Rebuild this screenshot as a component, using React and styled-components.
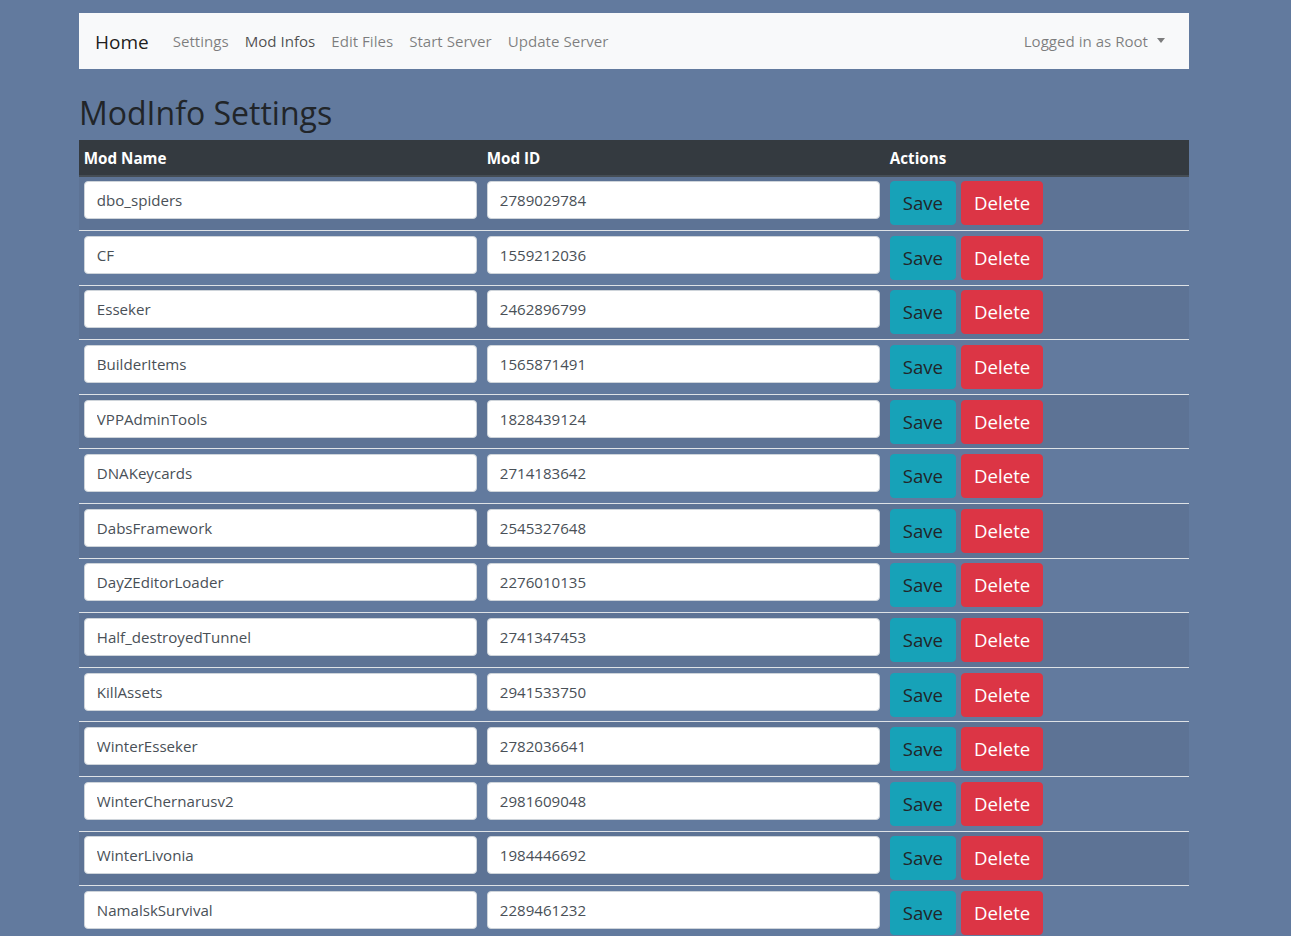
import React from "react";
import styled, { createGlobalStyle } from "styled-components";

const Global = createGlobalStyle`
  html, body { margin: 0; padding: 0; }
  body {
    background: #627a9e;
    font-family: "Open Sans", "Noto Sans", sans-serif;
    font-size: 15.1px;
    line-height: 24px;
    color: #212529;
  }
  * { box-sizing: border-box; }
`;

const Page = styled.div`
  width: 1110px;
  margin-left: 79px;
  padding-top: 13px;
`;

const Navbar = styled.nav`
  display: flex;
  align-items: center;
  height: 56px;
  padding: 8px 16px;
  background: #f8f9fa;
`;

const Brand = styled.a`
  font-size: 19px;
  line-height: 30px;
  color: rgba(0, 0, 0, 0.9);
  margin-right: 16px;
  margin-top: 2px;
  text-decoration: none;
`;

const NavList = styled.div`
  display: flex;
  flex: 1;
`;

const NavLink = styled.a`
  padding: 8px;
  color: ${(p) => (p.$hover ? "rgba(0,0,0,.7)" : "rgba(0,0,0,.5)")};
  text-decoration: none;
  cursor: pointer;
`;

const Dropdown = styled.a`
  padding: 8px;
  color: rgba(0, 0, 0, 0.5);
  display: flex;
  align-items: center;
  &::after {
    content: "";
    display: inline-block;
    margin-left: 9px;
    border-top: 5px solid currentColor;
    border-left: 4.5px solid transparent;
    border-right: 4.5px solid transparent;
    margin-top: -2px;
  }
`;

const Title = styled.h2`
  font-size: 32px;
  font-weight: 500;
  line-height: 38px;
  margin: 25px 0 8px;
  color: #212529;
`;

const Table = styled.table`
  width: 100%;
  border-collapse: collapse;
  color: #212529;
`;

const Th = styled.th`
  background: #343a40;
  color: #fff;
  text-align: left;
  font-weight: 700;
  font-size: 15.2px;
  line-height: 24px;
  padding: 5.5px 4.8px 5px;
  border-bottom: 2px solid #454d55;
  width: ${(p) => p.$w};
`;

const Row = styled.tr`
  background: ${(p) => (p.$odd ? "rgba(0,0,0,.05)" : "transparent")};
  border-top: 1px solid #dee2e6;
  &:first-child { border-top: none; }
`;

const Td = styled.td`
  padding: 4.8px;
  vertical-align: top;
`;

const Input = styled.input`
  display: block;
  width: 100%;
  height: 38px;
  padding: 6px 12px;
  font-family: inherit;
  font-size: 15.1px;
  line-height: 24px;
  color: #495057;
  background: #fff;
  border: 1px solid #ced4da;
  border-radius: 4px;
  outline: none;
`;

const Actions = styled.div`
  display: flex;
  gap: 5px;
`;

const Button = styled.button`
  font-family: inherit;
  font-size: 18.6px;
  line-height: 30px;
  padding: 6px 12px;
  border: 1px solid ${(p) => p.$bg};
  border-radius: 4px;
  background: ${(p) => p.$bg};
  color: ${(p) => p.$fg};
  cursor: pointer;
`;

const mods = [
  ["dbo_spiders", "2789029784"],
  ["CF", "1559212036"],
  ["Esseker", "2462896799"],
  ["BuilderItems", "1565871491"],
  ["VPPAdminTools", "1828439124"],
  ["DNAKeycards", "2714183642"],
  ["DabsFramework", "2545327648"],
  ["DayZEditorLoader", "2276010135"],
  ["Half_destroyedTunnel", "2741347453"],
  ["KillAssets", "2941533750"],
  ["WinterEsseker", "2782036641"],
  ["WinterChernarusv2", "2981609048"],
  ["WinterLivonia", "1984446692"],
  ["NamalskSurvival", "2289461232"],
];

export default function App() {
  return (
    <>
      <Global />
      <Page>
        <Navbar>
          <Brand>Home</Brand>
          <NavList>
            <NavLink>Settings</NavLink>
            <NavLink $hover>Mod Infos</NavLink>
            <NavLink>Edit Files</NavLink>
            <NavLink>Start Server</NavLink>
            <NavLink>Update Server</NavLink>
          </NavList>
          <Dropdown>Logged in as Root</Dropdown>
        </Navbar>
        <Title>ModInfo Settings</Title>
        <Table>
          <thead>
            <tr>
              <Th $w="403px">Mod Name</Th>
              <Th $w="403px">Mod ID</Th>
              <Th>Actions</Th>
            </tr>
          </thead>
          <tbody>
            {mods.map(([name, id], i) => (
              <Row key={name} $odd={i % 2 === 0}>
                <Td>
                  <Input defaultValue={name} />
                </Td>
                <Td>
                  <Input defaultValue={id} />
                </Td>
                <Td>
                  <Actions>
                    <Button $bg="#17a2b8" $fg="#212529">Save</Button>
                    <Button $bg="#dc3545" $fg="#fff">Delete</Button>
                  </Actions>
                </Td>
              </Row>
            ))}
          </tbody>
        </Table>
      </Page>
    </>
  );
}
